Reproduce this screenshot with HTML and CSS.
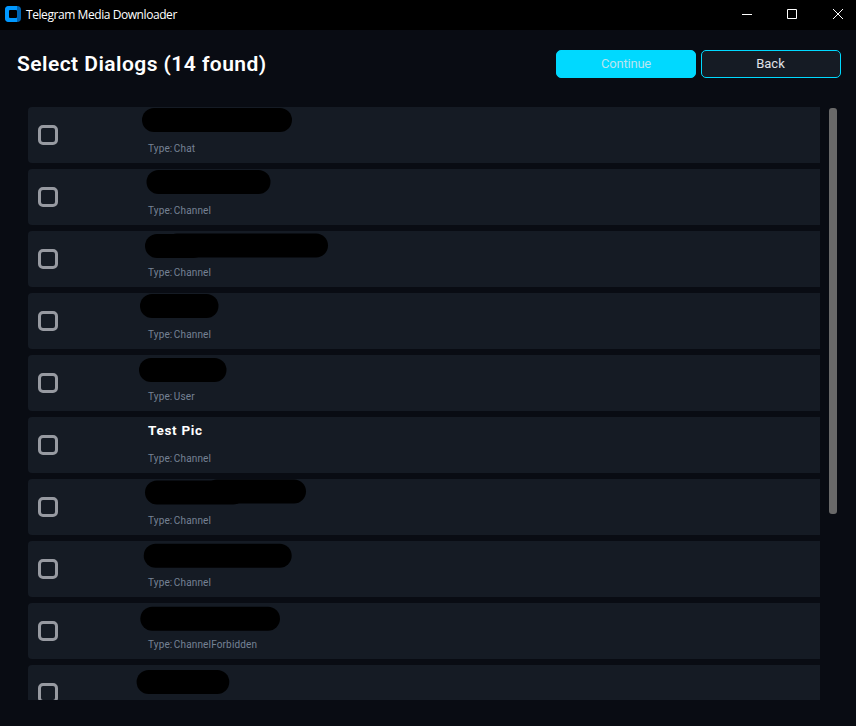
FILE: index.html
```
<!DOCTYPE html>
<html lang="en">
<head>
<meta charset="utf-8">
<title>Telegram Media Downloader</title>
<link rel="stylesheet" href="styles.css">
</head>
<body>
<header class="titlebar">
  <svg class="logo" width="16" height="16" viewBox="0 0 16 16"><rect width="16" height="16" rx="4" fill="#0065b3"/><path d="M4 0h8v16H4a4 4 0 0 1-4-4V4a4 4 0 0 1 4-4z" fill="#0098ff"/><rect x="4" y="4" width="8" height="8" rx="1" fill="#000"/></svg>
  <span class="app-name">Telegram Media Downloader</span>
  <div class="controls">
    <svg class="minimize" width="10" height="10" viewBox="0 0 10 10"><path d="M0 5.5h10"/></svg>
    <svg width="10" height="10" viewBox="0 0 10 10"><path d="M.5.5h9v9h-9z"/></svg>
    <svg width="10" height="10" viewBox="0 0 10 10"><path d="M0 0l10 10M10 0L0 10"/></svg>
  </div>
</header>
<section class="toolbar">
  <h1>Select Dialogs (14 found)</h1>
  <button class="btn primary">Continue</button>
  <button class="btn">Back</button>
</section>
<main class="content">
  <div class="list">
    <div class="row"><span class="check"></span><span class="type">Type: Chat</span><svg class="mask" width="340" height="56"><rect x="114" y="1" width="150" height="24" rx="12"/></svg></div>
    <div class="row"><span class="check"></span><span class="type">Type: Channel</span><svg class="mask" width="340" height="56"><rect x="118.5" y="1" width="124" height="24" rx="12"/></svg></div>
    <div class="row"><span class="check"></span><span class="type">Type: Channel</span><svg class="mask" width="340" height="56"><rect x="117" y="3" width="60" height="24" rx="12"/><rect x="137" y="2.5" width="163" height="24" rx="12"/></svg></div>
    <div class="row"><span class="check"></span><span class="type">Type: Channel</span><svg class="mask" width="340" height="56"><rect x="112" y="1" width="78.5" height="24" rx="12"/></svg></div>
    <div class="row"><span class="check"></span><span class="type">Type: User</span><svg class="mask" width="340" height="56"><rect x="111" y="3" width="87.5" height="24" rx="12"/></svg></div>
    <div class="row"><span class="check"></span><span class="name">Test Pic</span><span class="type">Type: Channel</span></div>
    <div class="row"><span class="check"></span><span class="type">Type: Channel</span><svg class="mask" width="340" height="56"><rect x="117" y="1.5" width="100" height="24" rx="12"/><rect x="177" y=".5" width="101" height="24" rx="12"/></svg></div>
    <div class="row"><span class="check"></span><span class="type">Type: Channel</span><svg class="mask" width="340" height="56"><rect x="115.7" y="2.7" width="148" height="24" rx="12"/></svg></div>
    <div class="row"><span class="check"></span><span class="type">Type: ChannelForbidden</span><svg class="mask" width="340" height="56"><rect x="112.3" y="3.7" width="139.7" height="24" rx="12"/></svg></div>
    <div class="row"><span class="check"></span><svg class="mask" width="340" height="56"><rect x="108.6" y="5" width="92.7" height="24" rx="12"/></svg></div>
  </div>
  <div class="scrollbar"></div>
</main>
</body>
</html>
```

FILE: styles.css
```
* { box-sizing: border-box; }
body {
  margin: 0;
  height: 726px;
  overflow: hidden;
  background: #090c13;
  color: #fff;
  font-family: Roboto, sans-serif;
}
.titlebar {
  display: flex;
  align-items: center;
  height: 30px;
  padding: 0 13px 0 5px;
  background: #000;
}
.logo { margin: -2px 5px 0 0; }
.app-name {
  font: 12px/16px "Open Sans", sans-serif;
  letter-spacing: -0.43px;
}
.controls {
  display: flex;
  gap: 36px;
  margin: -2px 0 0 auto;
}
.controls svg { fill: none; stroke: #fff; overflow: visible; }
.controls .minimize { margin-right: -1px; }
.toolbar {
  display: flex;
  align-items: center;
  gap: 5px;
  height: 68px;
  padding: 0 15px 0 17px;
}
h1 {
  flex: 1;
  margin: 0;
  font-size: 21px;
  line-height: 24px;
  font-weight: 600;
  letter-spacing: 0.45px;
}
.btn {
  width: 140px;
  height: 28px;
  padding: 0 1px 1px 0;
  border: 1px solid #00d9ff;
  border-radius: 5px;
  background: #151b24;
  color: #e0e2e8;
  font: 13px/16px Roboto, sans-serif;
}
.primary {
  padding-right: 0;
  background: #00d9ff;
  color: #b8e4ef;
  letter-spacing: -0.2px;
}
.content {
  display: flex;
  gap: 9px;
  padding: 9px 0 0 28px;
}
.list {
  display: flex;
  flex-direction: column;
  gap: 6px;
  width: 792px;
  height: 593px;
  overflow: hidden;
}
.row {
  position: relative;
  display: grid;
  flex: none;
  grid-template: 28px 28px / 110px 1fr;
  height: 56px;
  padding-left: 10px;
  border-radius: 4px 0 0 4px;
  background: #151b24;
}
.check {
  grid-row: 1 / 3;
  align-self: center;
  width: 20px;
  height: 20px;
  border: 3px solid #979aa1;
  border-radius: 5px;
}
.name, .type { grid-column: 2; }
.name {
  grid-row: 1;
  padding-top: 5px;
  font-size: 13.5px;
  line-height: 17px;
  font-weight: 700;
  letter-spacing: 0.7px;
}
.type {
  grid-row: 2;
  padding-top: 7px;
  color: #758294;
  font-size: 10px;
  line-height: 13px;
  letter-spacing: 0.15px;
  word-spacing: -1.2px;
}
.mask { position: absolute; left: 0; top: 0; fill: #000; }
.scrollbar {
  width: 8px;
  height: 406px;
  margin-top: 1px;
  border-radius: 3px;
  background: #696969;
}
```
